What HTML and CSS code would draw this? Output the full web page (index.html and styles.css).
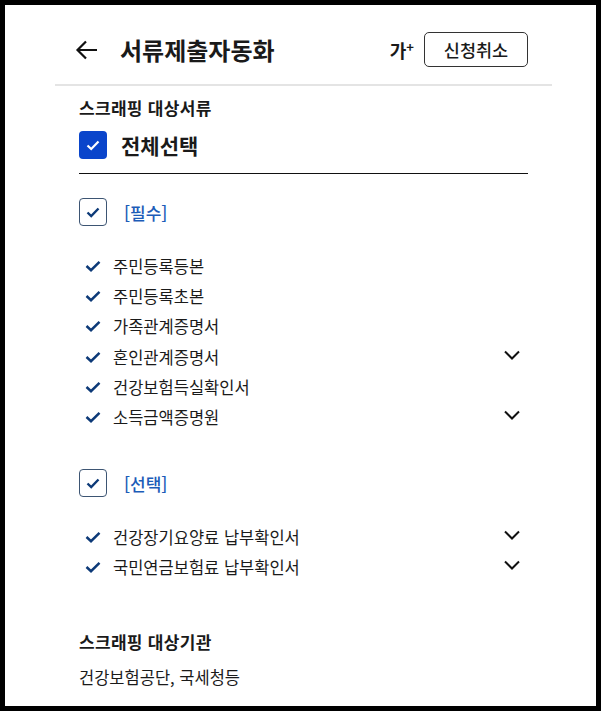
FILE: index.html
```html
<!DOCTYPE html>
<html lang="ko">
<head>
  <meta charset="UTF-8">
  <meta name="viewport" content="width=device-width, initial-scale=1.0">
  <title>서류제출자동화</title>
  <link rel="stylesheet" href="styles.css">
</head>
<body>
<div class="frame">
  <header class="header">
    <button class="back" aria-label="뒤로">
      <svg width="26" height="26" viewBox="0 0 26 26"><path d="M23 13H4M12 4.5L3.5 13L12 21.5" fill="none" stroke="#111" stroke-width="2.2"/></svg>
    </button>
    <h1 class="title">서류제출자동화</h1>
    <span class="font-size">가<sup>+</sup></span>
    <button class="cancel">신청취소</button>
  </header>

  <main class="content">
    <h2 class="section-title">스크래핑 대상서류</h2>
    <label class="select-all">
      <span class="box box-filled">
        <svg width="16" height="16" viewBox="0 0 16 16"><path d="M2.5 8.5L6.2 12L13.5 4.5" fill="none" stroke="#fff" stroke-width="2.2"/></svg>
      </span>
      전체선택
    </label>

    <div class="group">
      <label class="group-head">
        <span class="box box-outline">
          <svg width="16" height="16" viewBox="0 0 16 16"><path d="M2.5 8.5L6.2 12L13.5 4.5" fill="none" stroke="#0d3a78" stroke-width="2.4"/></svg>
        </span>
        <span class="group-name">[필수]</span>
      </label>
      <ul class="docs">
        <li><span class="tick"></span>주민등록등본</li>
        <li><span class="tick"></span>주민등록초본</li>
        <li><span class="tick"></span>가족관계증명서</li>
        <li><span class="tick"></span>혼인관계증명서<span class="more"></span></li>
        <li><span class="tick"></span>건강보험득실확인서</li>
        <li><span class="tick"></span>소득금액증명원<span class="more"></span></li>
      </ul>
    </div>

    <div class="group group-optional">
      <label class="group-head">
        <span class="box box-outline">
          <svg width="16" height="16" viewBox="0 0 16 16"><path d="M2.5 8.5L6.2 12L13.5 4.5" fill="none" stroke="#0d3a78" stroke-width="2.4"/></svg>
        </span>
        <span class="group-name">[선택]</span>
      </label>
      <ul class="docs">
        <li><span class="tick"></span>건강장기요양료 납부확인서<span class="more"></span></li>
        <li><span class="tick"></span>국민연금보험료 납부확인서<span class="more"></span></li>
      </ul>
    </div>

    <h2 class="section-title section-agency">스크래핑 대상기관</h2>
    <p class="agency">건강보험공단, 국세청등</p>
  </main>
</div>

<script>
// tick / chevron icons are the same everywhere, so fill them in once
const tickSvg = '<svg width="18" height="18" viewBox="0 0 18 18"><path d="M2.5 9L7 13.2L15.5 4.8" fill="none" stroke="#0d3a78" stroke-width="2.5"/></svg>';
const moreSvg = '<svg width="20" height="20" viewBox="0 0 20 20"><path d="M3 6.5L10 13.5L17 6.5" fill="none" stroke="#111" stroke-width="2"/></svg>';
document.querySelectorAll('.tick').forEach(el => el.innerHTML = tickSvg);
document.querySelectorAll('.more').forEach(el => el.innerHTML = moreSvg);
</script>
</body>
</html>
```

FILE: styles.css
```css
* { box-sizing: border-box; }
body {
  margin: 0;
  background: #000;
  font-family: "Noto Sans CJK KR", "Noto Sans", sans-serif;
  color: #1a1a1a;
}
.frame {
  height: 711px;
  border: 5px solid #000;
  background: #fff;
}
.header {
  display: flex;
  align-items: center;
  height: 81px;
  margin: 0 44px 0 50px;
  padding: 10px 24px 0 19px;
  border-bottom: 2px solid #e4e4e4;
}
.back {
  border: 0;
  background: none;
  padding: 0;
  width: 26px;
  height: 26px;
  display: flex;
}
.title {
  margin: 0 0 0 20px;
  font-size: 24px;
  font-weight: 700;
  flex: 1;
}
.font-size {
  font-size: 18px;
  font-weight: 700;
  margin-right: 10px;
}
.font-size sup {
  font-size: 13px;
  vertical-align: 6px;
  line-height: 0;
}
.cancel {
  font-family: inherit;
  font-size: 17.5px;
  font-weight: 500;
  color: #1a1a1a;
  width: 104px;
  height: 35px;
  border: 1px solid #333;
  border-radius: 5px;
  background: #fff;
  padding: 0;
}
.content {
  padding: 0 68px 0 74px;
}
.section-title {
  margin: 10px 0 0;
  font-size: 17px;
  font-weight: 700;
  line-height: 24px;
  letter-spacing: 0.3px;
}
.select-all {
  display: flex;
  align-items: center;
  gap: 14px;
  margin-top: 10px;
  padding-bottom: 13px;
  border-bottom: 1px solid #111;
  font-size: 21px;
  font-weight: 700;
}
.box {
  width: 28px;
  height: 28px;
  border-radius: 4px;
  display: flex;
  align-items: center;
  justify-content: center;
}
.box-filled { background: #0a45cb; }
.box-outline { border: 1.5px solid #3d5573; }
.group { margin-top: 24px; }
.group-optional { margin-top: 37px; }
.group-head {
  display: flex;
  align-items: center;
  gap: 17px;
}
.group-name {
  color: #1c5cb8;
  font-size: 17px;
  font-weight: 500;
}
.docs {
  list-style: none;
  margin: 25px 0 0;
  padding: 0;
}
.docs li {
  display: flex;
  align-items: center;
  height: 30.2px;
  padding-left: 5px;
  font-size: 16.5px;
}
.tick {
  display: flex;
  width: 18px;
  margin-right: 11px;
}
.more {
  display: flex;
  margin-left: auto;
  margin-right: 6px;
  margin-top: -4px;
}
.section-agency { margin-top: 47px; }
.agency {
  margin: 11px 0 0;
  font-size: 16.5px;
  line-height: 24px;
}
```
